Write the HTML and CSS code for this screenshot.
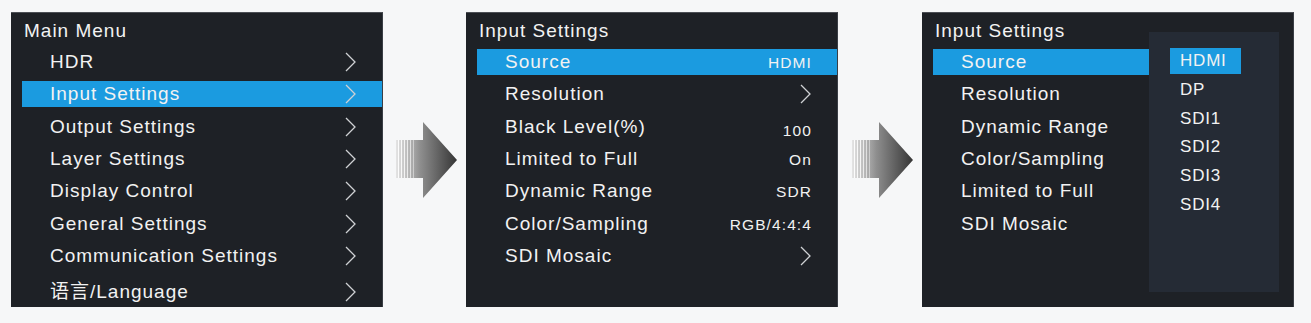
FILE: index.html
```html
<!DOCTYPE html>
<html>
<head lang="en">
    <meta charset="UTF-8">
    <title>Menu</title>
    <link rel="stylesheet" href="styles.css">
</head>
<body>
<div class="flow">
    <!-- main menu -->
    <div class="panel">
        <div class="title">Main Menu</div>
        <ul class="menu">
            <li class="row"><div class="bar"><span>HDR</span><svg class="chev" viewBox="0 0 11 20"><path d="M1 1 L10 10 L1 19"/></svg></div></li>
            <li class="row active"><div class="bar"><span>Input Settings</span><svg class="chev" viewBox="0 0 11 20"><path d="M1 1 L10 10 L1 19"/></svg></div></li>
            <li class="row"><div class="bar"><span>Output Settings</span><svg class="chev" viewBox="0 0 11 20"><path d="M1 1 L10 10 L1 19"/></svg></div></li>
            <li class="row"><div class="bar"><span>Layer Settings</span><svg class="chev" viewBox="0 0 11 20"><path d="M1 1 L10 10 L1 19"/></svg></div></li>
            <li class="row"><div class="bar"><span>Display Control</span><svg class="chev" viewBox="0 0 11 20"><path d="M1 1 L10 10 L1 19"/></svg></div></li>
            <li class="row"><div class="bar"><span>General Settings</span><svg class="chev" viewBox="0 0 11 20"><path d="M1 1 L10 10 L1 19"/></svg></div></li>
            <li class="row"><div class="bar"><span>Communication Settings</span><svg class="chev" viewBox="0 0 11 20"><path d="M1 1 L10 10 L1 19"/></svg></div></li>
            <li class="row last"><div class="bar"><span>语言/Language</span><svg class="chev" viewBox="0 0 11 20"><path d="M1 1 L10 10 L1 19"/></svg></div></li>
        </ul>
    </div>

    <svg class="arrow" viewBox="0 0 61 76">
        <defs>
            <linearGradient id="ag1" x1="0" y1="0" x2="1" y2="0">
                <stop offset="0" stop-color="#e4e4e4"/>
                <stop offset="0.4" stop-color="#8e8e8e"/>
                <stop offset="1" stop-color="#353535"/>
            </linearGradient>
        </defs>
        <path d="M0 18 H27 V0 L61 38 L27 76 V56 H0 Z" fill="url(#ag1)"/>
        <rect x="2" y="18" width="1" height="38" fill="#fff" opacity="0.9"/>
        <rect x="5" y="18" width="1" height="38" fill="#fff" opacity="0.85"/>
        <rect x="8" y="18" width="1" height="38" fill="#fff" opacity="0.8"/>
        <rect x="11" y="18" width="1" height="38" fill="#fff" opacity="0.7"/>
        <rect x="14" y="18" width="1" height="38" fill="#fff" opacity="0.6"/>
        <rect x="17" y="18" width="1" height="38" fill="#fff" opacity="0.45"/>
    </svg>

    <!-- input settings -->
    <div class="panel">
        <div class="title">Input Settings</div>
        <ul class="menu">
            <li class="row active"><div class="bar"><span>Source</span><em class="val">HDMI</em></div></li>
            <li class="row"><div class="bar"><span>Resolution</span><svg class="chev" viewBox="0 0 11 20"><path d="M1 1 L10 10 L1 19"/></svg></div></li>
            <li class="row"><div class="bar"><span>Black Level(%)</span><em class="val low">100</em></div></li>
            <li class="row"><div class="bar"><span>Limited to Full</span><em class="val">On</em></div></li>
            <li class="row"><div class="bar"><span>Dynamic Range</span><em class="val">SDR</em></div></li>
            <li class="row"><div class="bar"><span>Color/Sampling</span><em class="val">RGB/4:4:4</em></div></li>
            <li class="row"><div class="bar"><span>SDI Mosaic</span><svg class="chev" viewBox="0 0 11 20"><path d="M1 1 L10 10 L1 19"/></svg></div></li>
        </ul>
    </div>

    <svg class="arrow second" viewBox="0 0 61 76">
        <defs>
            <linearGradient id="ag2" x1="0" y1="0" x2="1" y2="0">
                <stop offset="0" stop-color="#e4e4e4"/>
                <stop offset="0.4" stop-color="#8e8e8e"/>
                <stop offset="1" stop-color="#353535"/>
            </linearGradient>
        </defs>
        <path d="M0 18 H27 V0 L61 38 L27 76 V56 H0 Z" fill="url(#ag2)"/>
        <rect x="2" y="18" width="1" height="38" fill="#fff" opacity="0.9"/>
        <rect x="5" y="18" width="1" height="38" fill="#fff" opacity="0.85"/>
        <rect x="8" y="18" width="1" height="38" fill="#fff" opacity="0.8"/>
        <rect x="11" y="18" width="1" height="38" fill="#fff" opacity="0.7"/>
        <rect x="14" y="18" width="1" height="38" fill="#fff" opacity="0.6"/>
        <rect x="17" y="18" width="1" height="38" fill="#fff" opacity="0.45"/>
    </svg>

    <!-- source picker -->
    <div class="panel split">
        <div class="title">Input Settings</div>
        <ul class="menu">
            <li class="row active"><div class="bar"><span>Source</span></div></li>
            <li class="row"><div class="bar"><span>Resolution</span></div></li>
            <li class="row"><div class="bar"><span>Dynamic Range</span></div></li>
            <li class="row"><div class="bar"><span>Color/Sampling</span></div></li>
            <li class="row"><div class="bar"><span>Limited to Full</span></div></li>
            <li class="row"><div class="bar"><span>SDI Mosaic</span></div></li>
        </ul>
        <ul class="popup">
            <li class="select">HDMI</li>
            <li>DP</li>
            <li>SDI1</li>
            <li>SDI2</li>
            <li>SDI3</li>
            <li>SDI4</li>
        </ul>
    </div>
</div>
</body>
</html>
```

FILE: styles.css
```css
body,div,ul,li,em { margin:0; padding:0; }
body { background:#f6f7f8; color:#f2f2f2; font-family: "Liberation Sans", Arial, "Noto Sans CJK SC", sans-serif; }
ol,ul,li { list-style:none; }
em { font-style: normal; }

.flow{
    display: flex;
    align-items: center;
    padding: 12px 0 0 11px;
}

.panel{
    width: 372px;
    height: 295px;
    box-sizing: border-box;
    background-color: #1e2126;
    border-top: 1px solid #4c4f55;
    border-right: 1px solid #3a3e45;
    position: relative;
    flex: none;
}

.title{
    font-size: 19px;
    letter-spacing: 1px;
    line-height: 31px;
    padding: 2px 0 0 13px;
}

.row{
    height: 32.3px;
    display: flex;
    align-items: center;
    font-size: 19px;
    letter-spacing: 1px;
}
.row.last{
    margin-top: 4px;
}

.bar{
    flex: 1;
    height: 26px;
    line-height: 26px;
    margin-left: 11px;
    padding: 0 26px 0 28px;
    display: flex;
    justify-content: space-between;
    align-items: baseline;
}

.active .bar{
    background-color: #1b9be0;
}

.chev{
    width: 11px;
    height: 20px;
    align-self: center;
    fill: none;
    stroke: #cfd1d4;
    stroke-width: 1.3;
}

.val{
    font-size: 15.5px;
    letter-spacing: 1.1px;
    margin-right: -1px;
}
.val.low{
    position: relative;
    top: 3px;
}

.arrow{
    width: 61px;
    height: 76px;
    margin: 0 9px 0 13px;
    flex: none;
}
.arrow.second{
    margin-left: 14px;
}

.split .menu{
    width: 229px;
}

/* popup list laid over the right part of the panel */
.popup{
    position: absolute;
    left: 227px;
    top: 19px;
    width: 130px;
    height: 260px;
    box-sizing: border-box;
    padding: 16px 0 0 21px;
    background-color: #252b35;
    display: flex;
    flex-direction: column;
    align-items: flex-start;
}
.popup li{
    height: 26px;
    line-height: 26px;
    margin-bottom: 2.8px;
    padding: 0 14px 0 10px;
    font-size: 17px;
    letter-spacing: 0.8px;
}
.popup .select{
    background-color: #1b9be0;
}
```
